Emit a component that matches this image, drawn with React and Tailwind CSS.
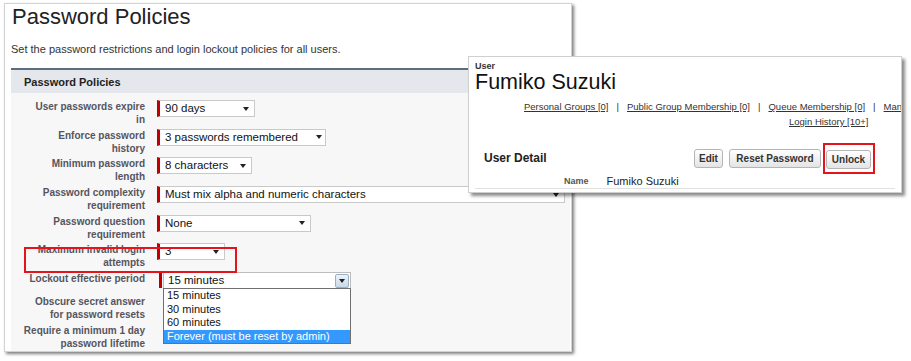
import React from 'react';

const rows = [
  { label: ['User passwords expire', 'in'], value: '90 days', w: 'w-[98px]' },
  { label: ['Enforce password', 'history'], value: '3 passwords remembered', w: 'w-[169px]', pr: 'pr-[3px]' },
  { label: ['Minimum password', 'length'], value: '8 characters', w: 'w-[95px]' },
  { label: ['Password complexity', 'requirement'], value: 'Must mix alpha and numeric characters', w: 'w-[408px]' },
  { label: ['Password question', 'requirement'], value: 'None', w: 'w-[154px]' },
  { label: ['Maximum invalid login', 'attempts'], value: '3', w: 'w-[68px]' },
];

function Arrow() {
  return (
    <svg width="6" height="4" viewBox="0 0 6 4" className="shrink-0">
      <path d="M0 0 L6 0 L3 4 Z" fill="#222" />
    </svg>
  );
}

function Label({ lines }) {
  return (
    <div className="w-[134px] shrink-0 text-right text-[10px] leading-[13px] font-bold text-[#55555f]">
      {lines.map((l) => (
        <div key={l} className="whitespace-nowrap">{l}</div>
      ))}
    </div>
  );
}

function Select({ value, w, pr = 'pr-[5px]' }) {
  return (
    <div className={`${w} ${pr} ml-[12px] h-[17px] flex items-center justify-between border border-[#c9c9c9] border-l-[3px] border-l-[#c00000] bg-white pl-[5px] text-[11.5px] text-[#111] whitespace-nowrap`}>
      <span>{value}</span>
      <Arrow />
    </div>
  );
}

function LockoutSelect() {
  return (
    <div className="ml-[14px] flex items-start">
      <div className="w-[3px] h-[15px] mt-[1px] bg-[#c00000]" />
      <div className="relative ml-[1px]">
        <div className="w-[188px] h-[17px] flex items-center justify-between border border-[#bdbdbd] bg-white pl-[4px] pr-[1px] text-[11.5px] text-[#111]">
          <span>15 minutes</span>
          <div className="w-[14px] h-[14px] flex items-center justify-center rounded-[2px] border border-[#9ab0c8] bg-gradient-to-b from-[#eef3f8] to-[#c9d8e8]">
            <Arrow />
          </div>
        </div>
        <div className="absolute left-0 top-[16px] w-[188px] border border-[#707070] bg-white text-[11px] leading-[13.5px] text-[#111] z-10">
          <div className="pl-[3px]">15 minutes</div>
          <div className="pl-[3px]">30 minutes</div>
          <div className="pl-[3px]">60 minutes</div>
          <div className="pl-[3px] bg-[#3399ff] text-white">Forever (must be reset by admin)</div>
        </div>
      </div>
    </div>
  );
}

function UserCard() {
  return (
    <div className="absolute left-[468px] top-[56px] w-[434px] h-[137px] overflow-hidden border border-[#cfcfcf] bg-white px-[6px] pt-[4px] shadow-[3px_3px_3px_rgba(0,0,0,0.45)]">
      <div className="text-[9px] leading-[10px] font-bold text-[#333]">User</div>
      <div className="text-[21.5px] leading-[22px] text-[#111]">Fumiko Suzuki</div>
      <div className="mt-[6px] ml-[49px] text-[9.5px] leading-[15px] text-[#333] whitespace-nowrap">
        <span className="underline">Personal Groups [0]</span>
        <span className="mx-[8px]">|</span>
        <span className="underline">Public Group Membership [0]</span>
        <span className="mx-[8px]">|</span>
        <span className="underline">Queue Membership [0]</span>
        <span className="mx-[8px]">|</span>
        <span className="underline">Managers [0]</span>
      </div>
      <div className="ml-[314px] text-[9.5px] leading-[15px] text-[#333] whitespace-nowrap">
        <span className="underline">Login History [10+]</span>
      </div>
      <div className="mt-[16px] h-[26px] flex items-center">
        <div className="ml-[9px] text-[12px] font-bold text-[#222]">User Detail</div>
        <div className="ml-auto mr-[20px] flex items-center">
          <button className="w-[29px] h-[19px] rounded-[3px] border border-[#b5b5b5] bg-gradient-to-b from-white to-[#e4e4e4] text-[10px] font-bold text-[#333]">Edit</button>
          <button className="ml-[6px] w-[92px] h-[19px] rounded-[3px] border border-[#b5b5b5] bg-gradient-to-b from-white to-[#e4e4e4] text-[10px] font-bold text-[#333]">Reset Password</button>
          <div className="ml-[2px] border-2 border-[#e3141c] pt-[1px] pl-[1px] pr-[2px] pb-[2px]">
            <button className="w-[45px] h-[19px] rounded-[3px] border border-[#b5b5b5] bg-gradient-to-b from-white to-[#e4e4e4] text-[10px] font-bold text-[#333]">Unlock</button>
          </div>
        </div>
      </div>
      <div className="mt-[4px] h-[14px] flex items-center border-b border-[#e2e2e2]">
        <div className="ml-[89px] text-[9px] font-bold text-[#555]">Name</div>
        <div className="ml-[18px] text-[11px] text-[#222]">Fumiko Suzuki</div>
      </div>
    </div>
  );
}

export default function App() {
  return (
    <div className="relative w-[911px] h-[361px] overflow-hidden bg-white" style={{ fontFamily: '"Liberation Sans", Arial, sans-serif' }}>
      <div className="ml-[4px] mt-[3px] w-[568px] h-[349px] border border-[#d2d2d2] bg-white pl-[6px] pr-[1px] shadow-[2px_2px_3px_rgba(0,0,0,0.5)]">
        <h1 className="pl-[1px] text-[22px] leading-[26px] text-[#222]">Password Policies</h1>
        <p className="mt-[13px] text-[11px] leading-[13px] text-[#333]">
          Set the password restrictions and login lockout policies for all users.
        </p>
        <div className="mt-[12px] border-t-2 border-[#5c6d7d]">
          <div className="h-[23px] pt-[2px] pl-[13px] flex items-center bg-[#e4e8ed] text-[11px] font-bold text-[#222]">
            Password Policies
          </div>
          <div className="h-[258px] bg-[#f7f7f7] pt-[7px]">
            {rows.map((r) => (
              <div key={r.value} className="h-[28.7px] flex items-start">
                <Label lines={r.label} />
                <Select value={r.value} w={r.w} pr={r.pr} />
              </div>
            ))}
            <div className="h-[22.8px] flex items-start">
              <Label lines={['Lockout effective period']} />
              <LockoutSelect />
            </div>
            <div className="h-[29px] flex items-start">
              <Label lines={['Obscure secret answer', 'for password resets']} />
            </div>
            <div className="h-[29px] flex items-start">
              <Label lines={['Require a minimum 1 day', 'password lifetime']} />
            </div>
          </div>
        </div>
      </div>
      <div className="absolute left-[24px] top-[247px] w-[213px] h-[26px] border-2 border-[#e3141c]" />
      <UserCard />
    </div>
  );
}
